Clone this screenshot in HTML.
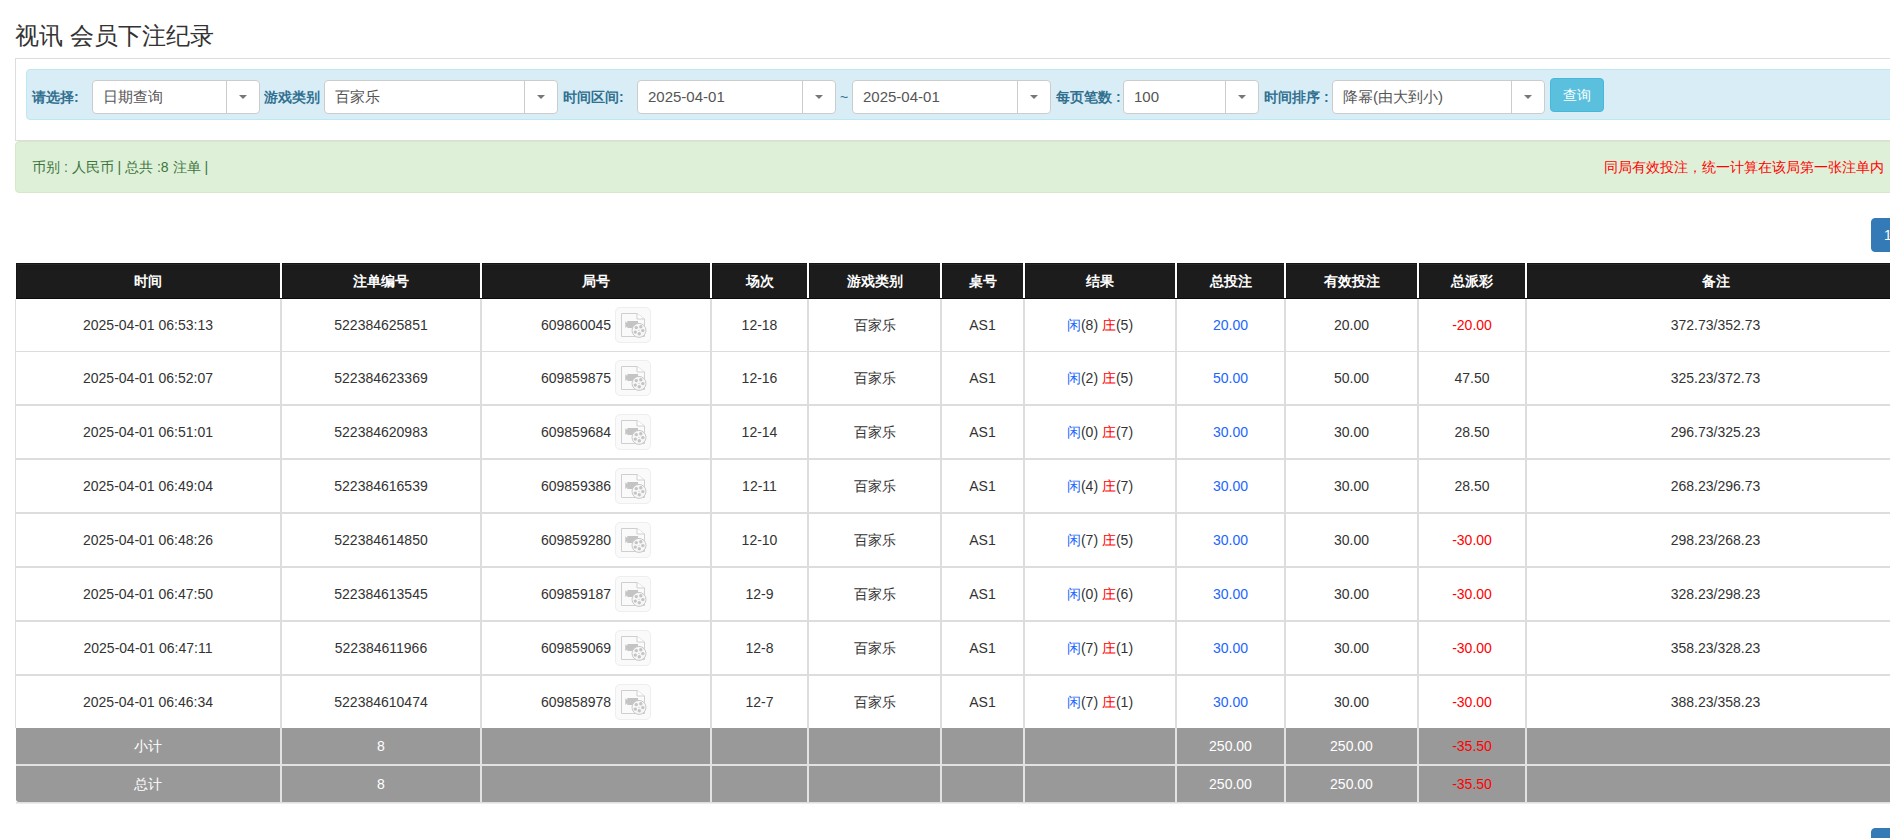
<!DOCTYPE html>
<html><head><meta charset="utf-8"><style>
*{box-sizing:border-box}
html,body{margin:0;padding:0;background:#fff}
body{width:1890px;height:838px;overflow:hidden;position:relative;font-family:"Liberation Sans",sans-serif;color:#333;font-size:14px}
.a{position:absolute}
.title{left:15px;top:19px;font-size:24px;line-height:34px;color:#333;white-space:nowrap}
.well{left:15px;top:58px;width:1900px;height:83px;border:1px solid #ddd;background:#fff}
.info{left:26px;top:69px;width:1890px;height:51px;background:#d9edf7;border:1px solid #bce8f1;border-radius:4px}
.lbl{font-size:14px;font-weight:bold;color:#31708f;line-height:34px;top:80px;white-space:nowrap}
.sel{top:80px;height:34px;background:#fff;border:1px solid #ccc;border-radius:4px}
.sel .t{position:absolute;left:10px;top:0;line-height:32px;font-size:15px;color:#555;white-space:nowrap}
.sel .d{position:absolute;top:0;bottom:0;width:1px;background:#ccc}
.sel .c{position:absolute;top:14px;width:0;height:0;border-left:4px solid transparent;border-right:4px solid transparent;border-top:4px solid #777}
.btn{left:1550px;top:78px;width:54px;height:34px;background:#5bc0de;border:1px solid #46b8da;border-radius:4px;color:#fff;font-size:14px;line-height:33px;text-align:center}
.succ{left:15px;top:141px;width:1890px;height:52px;background:#dff0d8;border:1px solid #d6e9c6;border-radius:4px}
.stxt{left:32px;top:158px;font-size:14px;line-height:18px;color:#3c763d;white-space:nowrap}
.rtxt{right:7px;top:158px;font-size:14px;line-height:18px;color:#ff0000;white-space:nowrap}
.pg{left:1871px;width:34px;height:34px;background:#337ab7;border:1px solid #337ab7;border-radius:4px;color:#fff;font-size:14px;line-height:32px;text-align:center}
.cell{position:absolute;display:flex;align-items:center;justify-content:center;white-space:nowrap;font-size:14px;line-height:20px}
.hd{background:#1c1c1c;color:#fff;font-weight:bold;font-size:14px;padding-top:0px;box-shadow:inset 1px 1px 0 #151515, inset 0 2px 0 #262626}
.ln{position:absolute;background:#ddd}
.ic{display:inline-block;width:36px;height:36px;margin-left:4px;border:1px solid #eee;border-radius:5px;background:#fafafa;position:relative;vertical-align:middle}
.ic svg{position:absolute;left:-1px;top:-1px}
.gr{background:#999;color:#fff}
</style></head><body>

<div class="a title">视讯 会员下注纪录</div>
<div class="a well"></div>
<div class="a info"></div>
<div class="a lbl" style="left:32px">请选择:</div>
<div class="a sel" style="left:92px;width:168px"><span class="t">日期查询</span><span class="d" style="left:133px"></span><span class="c" style="left:146px"></span></div>
<div class="a lbl" style="left:264px">游戏类别</div>
<div class="a sel" style="left:324px;width:234px"><span class="t">百家乐</span><span class="d" style="left:199px"></span><span class="c" style="left:212px"></span></div>
<div class="a lbl" style="left:563px">时间区间:</div>
<div class="a sel" style="left:637px;width:199px"><span class="t">2025-04-01</span><span class="d" style="left:164px"></span><span class="c" style="left:177px"></span></div>
<div class="a lbl" style="left:840px;font-weight:normal">~</div>
<div class="a sel" style="left:852px;width:199px"><span class="t">2025-04-01</span><span class="d" style="left:164px"></span><span class="c" style="left:177px"></span></div>
<div class="a lbl" style="left:1056px">每页笔数 :</div>
<div class="a sel" style="left:1123px;width:136px"><span class="t">100</span><span class="d" style="left:101px"></span><span class="c" style="left:114px"></span></div>
<div class="a lbl" style="left:1264px">时间排序 :</div>
<div class="a sel" style="left:1332px;width:213px"><span class="t">降幂(由大到小)</span><span class="d" style="left:178px"></span><span class="c" style="left:191px"></span></div>
<div class="a btn">查询</div>
<div class="a succ"></div>
<div class="a stxt">币别 : 人民币 | 总共 :8 注单 |</div>
<div class="a rtxt" style="right:auto;left:1604px">同局有效投注，统一计算在该局第一张注单内</div>
<div class="a pg" style="top:218px">1</div>
<div class="a pg" style="top:828px">1</div>
<div class="cell hd" style="left:16px;top:263px;width:264px;height:36px">时间</div>
<div class="cell hd" style="left:282px;top:263px;width:198px;height:36px">注单编号</div>
<div class="cell hd" style="left:482px;top:263px;width:228px;height:36px">局号</div>
<div class="cell hd" style="left:712px;top:263px;width:95px;height:36px">场次</div>
<div class="cell hd" style="left:809px;top:263px;width:131px;height:36px">游戏类别</div>
<div class="cell hd" style="left:942px;top:263px;width:81px;height:36px">桌号</div>
<div class="cell hd" style="left:1025px;top:263px;width:150px;height:36px">结果</div>
<div class="cell hd" style="left:1177px;top:263px;width:107px;height:36px">总投注</div>
<div class="cell hd" style="left:1286px;top:263px;width:131px;height:36px">有效投注</div>
<div class="cell hd" style="left:1419px;top:263px;width:106px;height:36px">总派彩</div>
<div class="cell hd" style="left:1527px;top:263px;width:377px;height:36px">备注</div>
<div class="ln" style="left:16px;top:298px;width:1890px;height:1px;background:#0a0a0a"></div>
<div class="cell" style="left:16px;top:299px;width:264px;height:52px"><span>2025-04-01 06:53:13</span></div>
<div class="cell" style="left:282px;top:299px;width:198px;height:52px"><span>522384625851</span></div>
<div class="cell" style="left:482px;top:299px;width:228px;height:52px"><span><span style="position:relative;top:1px">609860045</span><span class="ic"><svg width="36" height="36" viewBox="0 0 36 36"><path d="M6.5 6.5H22L29.5 12V29.5H6.5Z" fill="none" stroke="#cfcfcf" stroke-width="1"/><path d="M22 6.5V12H29.5" fill="#fff" stroke="#cfcfcf" stroke-width="1"/><path d="M10.3 14.3L12.3 16V14H23V21H12.3V19.3L10.3 21Z" fill="#c4c4c4"/><circle cx="24" cy="23.4" r="7" fill="#f7f7f7" stroke="#c8c8c8" stroke-width="1"/><circle cx="21.3" cy="20.6" r="1.7" fill="#c4c4c4"/><circle cx="25.8" cy="19.8" r="1.7" fill="#c4c4c4"/><circle cx="27.8" cy="23.6" r="1.7" fill="#c4c4c4"/><circle cx="24.3" cy="26.8" r="1.7" fill="#c4c4c4"/><circle cx="20.3" cy="25.1" r="1.7" fill="#c4c4c4"/><circle cx="24" cy="23.3" r="0.6" fill="#c4c4c4"/></svg></span></span></div>
<div class="cell" style="left:712px;top:299px;width:95px;height:52px"><span>12-18</span></div>
<div class="cell" style="left:809px;top:299px;width:131px;height:52px"><span>百家乐</span></div>
<div class="cell" style="left:942px;top:299px;width:81px;height:52px"><span>AS1</span></div>
<div class="cell" style="left:1025px;top:299px;width:150px;height:52px"><span><span style="color:#1a66ff">闲</span>(8) <span style="color:#ff0000">庄</span>(5)</span></div>
<div class="cell" style="left:1177px;top:299px;width:107px;height:52px"><span><span style="color:#1a66ff">20.00</span></span></div>
<div class="cell" style="left:1286px;top:299px;width:131px;height:52px"><span>20.00</span></div>
<div class="cell" style="left:1419px;top:299px;width:106px;height:52px"><span><span style="color:#ff0000">-20.00</span></span></div>
<div class="cell" style="left:1527px;top:299px;width:377px;height:52px"><span>372.73/352.73</span></div>
<div class="cell" style="left:16px;top:352px;width:264px;height:52px"><span>2025-04-01 06:52:07</span></div>
<div class="cell" style="left:282px;top:352px;width:198px;height:52px"><span>522384623369</span></div>
<div class="cell" style="left:482px;top:352px;width:228px;height:52px"><span><span style="position:relative;top:1px">609859875</span><span class="ic"><svg width="36" height="36" viewBox="0 0 36 36"><path d="M6.5 6.5H22L29.5 12V29.5H6.5Z" fill="none" stroke="#cfcfcf" stroke-width="1"/><path d="M22 6.5V12H29.5" fill="#fff" stroke="#cfcfcf" stroke-width="1"/><path d="M10.3 14.3L12.3 16V14H23V21H12.3V19.3L10.3 21Z" fill="#c4c4c4"/><circle cx="24" cy="23.4" r="7" fill="#f7f7f7" stroke="#c8c8c8" stroke-width="1"/><circle cx="21.3" cy="20.6" r="1.7" fill="#c4c4c4"/><circle cx="25.8" cy="19.8" r="1.7" fill="#c4c4c4"/><circle cx="27.8" cy="23.6" r="1.7" fill="#c4c4c4"/><circle cx="24.3" cy="26.8" r="1.7" fill="#c4c4c4"/><circle cx="20.3" cy="25.1" r="1.7" fill="#c4c4c4"/><circle cx="24" cy="23.3" r="0.6" fill="#c4c4c4"/></svg></span></span></div>
<div class="cell" style="left:712px;top:352px;width:95px;height:52px"><span>12-16</span></div>
<div class="cell" style="left:809px;top:352px;width:131px;height:52px"><span>百家乐</span></div>
<div class="cell" style="left:942px;top:352px;width:81px;height:52px"><span>AS1</span></div>
<div class="cell" style="left:1025px;top:352px;width:150px;height:52px"><span><span style="color:#1a66ff">闲</span>(2) <span style="color:#ff0000">庄</span>(5)</span></div>
<div class="cell" style="left:1177px;top:352px;width:107px;height:52px"><span><span style="color:#1a66ff">50.00</span></span></div>
<div class="cell" style="left:1286px;top:352px;width:131px;height:52px"><span>50.00</span></div>
<div class="cell" style="left:1419px;top:352px;width:106px;height:52px"><span><span style="color:#333">47.50</span></span></div>
<div class="cell" style="left:1527px;top:352px;width:377px;height:52px"><span>325.23/372.73</span></div>
<div class="cell" style="left:16px;top:406px;width:264px;height:52px"><span>2025-04-01 06:51:01</span></div>
<div class="cell" style="left:282px;top:406px;width:198px;height:52px"><span>522384620983</span></div>
<div class="cell" style="left:482px;top:406px;width:228px;height:52px"><span><span style="position:relative;top:1px">609859684</span><span class="ic"><svg width="36" height="36" viewBox="0 0 36 36"><path d="M6.5 6.5H22L29.5 12V29.5H6.5Z" fill="none" stroke="#cfcfcf" stroke-width="1"/><path d="M22 6.5V12H29.5" fill="#fff" stroke="#cfcfcf" stroke-width="1"/><path d="M10.3 14.3L12.3 16V14H23V21H12.3V19.3L10.3 21Z" fill="#c4c4c4"/><circle cx="24" cy="23.4" r="7" fill="#f7f7f7" stroke="#c8c8c8" stroke-width="1"/><circle cx="21.3" cy="20.6" r="1.7" fill="#c4c4c4"/><circle cx="25.8" cy="19.8" r="1.7" fill="#c4c4c4"/><circle cx="27.8" cy="23.6" r="1.7" fill="#c4c4c4"/><circle cx="24.3" cy="26.8" r="1.7" fill="#c4c4c4"/><circle cx="20.3" cy="25.1" r="1.7" fill="#c4c4c4"/><circle cx="24" cy="23.3" r="0.6" fill="#c4c4c4"/></svg></span></span></div>
<div class="cell" style="left:712px;top:406px;width:95px;height:52px"><span>12-14</span></div>
<div class="cell" style="left:809px;top:406px;width:131px;height:52px"><span>百家乐</span></div>
<div class="cell" style="left:942px;top:406px;width:81px;height:52px"><span>AS1</span></div>
<div class="cell" style="left:1025px;top:406px;width:150px;height:52px"><span><span style="color:#1a66ff">闲</span>(0) <span style="color:#ff0000">庄</span>(7)</span></div>
<div class="cell" style="left:1177px;top:406px;width:107px;height:52px"><span><span style="color:#1a66ff">30.00</span></span></div>
<div class="cell" style="left:1286px;top:406px;width:131px;height:52px"><span>30.00</span></div>
<div class="cell" style="left:1419px;top:406px;width:106px;height:52px"><span><span style="color:#333">28.50</span></span></div>
<div class="cell" style="left:1527px;top:406px;width:377px;height:52px"><span>296.73/325.23</span></div>
<div class="cell" style="left:16px;top:460px;width:264px;height:52px"><span>2025-04-01 06:49:04</span></div>
<div class="cell" style="left:282px;top:460px;width:198px;height:52px"><span>522384616539</span></div>
<div class="cell" style="left:482px;top:460px;width:228px;height:52px"><span><span style="position:relative;top:1px">609859386</span><span class="ic"><svg width="36" height="36" viewBox="0 0 36 36"><path d="M6.5 6.5H22L29.5 12V29.5H6.5Z" fill="none" stroke="#cfcfcf" stroke-width="1"/><path d="M22 6.5V12H29.5" fill="#fff" stroke="#cfcfcf" stroke-width="1"/><path d="M10.3 14.3L12.3 16V14H23V21H12.3V19.3L10.3 21Z" fill="#c4c4c4"/><circle cx="24" cy="23.4" r="7" fill="#f7f7f7" stroke="#c8c8c8" stroke-width="1"/><circle cx="21.3" cy="20.6" r="1.7" fill="#c4c4c4"/><circle cx="25.8" cy="19.8" r="1.7" fill="#c4c4c4"/><circle cx="27.8" cy="23.6" r="1.7" fill="#c4c4c4"/><circle cx="24.3" cy="26.8" r="1.7" fill="#c4c4c4"/><circle cx="20.3" cy="25.1" r="1.7" fill="#c4c4c4"/><circle cx="24" cy="23.3" r="0.6" fill="#c4c4c4"/></svg></span></span></div>
<div class="cell" style="left:712px;top:460px;width:95px;height:52px"><span>12-11</span></div>
<div class="cell" style="left:809px;top:460px;width:131px;height:52px"><span>百家乐</span></div>
<div class="cell" style="left:942px;top:460px;width:81px;height:52px"><span>AS1</span></div>
<div class="cell" style="left:1025px;top:460px;width:150px;height:52px"><span><span style="color:#1a66ff">闲</span>(4) <span style="color:#ff0000">庄</span>(7)</span></div>
<div class="cell" style="left:1177px;top:460px;width:107px;height:52px"><span><span style="color:#1a66ff">30.00</span></span></div>
<div class="cell" style="left:1286px;top:460px;width:131px;height:52px"><span>30.00</span></div>
<div class="cell" style="left:1419px;top:460px;width:106px;height:52px"><span><span style="color:#333">28.50</span></span></div>
<div class="cell" style="left:1527px;top:460px;width:377px;height:52px"><span>268.23/296.73</span></div>
<div class="cell" style="left:16px;top:514px;width:264px;height:52px"><span>2025-04-01 06:48:26</span></div>
<div class="cell" style="left:282px;top:514px;width:198px;height:52px"><span>522384614850</span></div>
<div class="cell" style="left:482px;top:514px;width:228px;height:52px"><span><span style="position:relative;top:1px">609859280</span><span class="ic"><svg width="36" height="36" viewBox="0 0 36 36"><path d="M6.5 6.5H22L29.5 12V29.5H6.5Z" fill="none" stroke="#cfcfcf" stroke-width="1"/><path d="M22 6.5V12H29.5" fill="#fff" stroke="#cfcfcf" stroke-width="1"/><path d="M10.3 14.3L12.3 16V14H23V21H12.3V19.3L10.3 21Z" fill="#c4c4c4"/><circle cx="24" cy="23.4" r="7" fill="#f7f7f7" stroke="#c8c8c8" stroke-width="1"/><circle cx="21.3" cy="20.6" r="1.7" fill="#c4c4c4"/><circle cx="25.8" cy="19.8" r="1.7" fill="#c4c4c4"/><circle cx="27.8" cy="23.6" r="1.7" fill="#c4c4c4"/><circle cx="24.3" cy="26.8" r="1.7" fill="#c4c4c4"/><circle cx="20.3" cy="25.1" r="1.7" fill="#c4c4c4"/><circle cx="24" cy="23.3" r="0.6" fill="#c4c4c4"/></svg></span></span></div>
<div class="cell" style="left:712px;top:514px;width:95px;height:52px"><span>12-10</span></div>
<div class="cell" style="left:809px;top:514px;width:131px;height:52px"><span>百家乐</span></div>
<div class="cell" style="left:942px;top:514px;width:81px;height:52px"><span>AS1</span></div>
<div class="cell" style="left:1025px;top:514px;width:150px;height:52px"><span><span style="color:#1a66ff">闲</span>(7) <span style="color:#ff0000">庄</span>(5)</span></div>
<div class="cell" style="left:1177px;top:514px;width:107px;height:52px"><span><span style="color:#1a66ff">30.00</span></span></div>
<div class="cell" style="left:1286px;top:514px;width:131px;height:52px"><span>30.00</span></div>
<div class="cell" style="left:1419px;top:514px;width:106px;height:52px"><span><span style="color:#ff0000">-30.00</span></span></div>
<div class="cell" style="left:1527px;top:514px;width:377px;height:52px"><span>298.23/268.23</span></div>
<div class="cell" style="left:16px;top:568px;width:264px;height:52px"><span>2025-04-01 06:47:50</span></div>
<div class="cell" style="left:282px;top:568px;width:198px;height:52px"><span>522384613545</span></div>
<div class="cell" style="left:482px;top:568px;width:228px;height:52px"><span><span style="position:relative;top:1px">609859187</span><span class="ic"><svg width="36" height="36" viewBox="0 0 36 36"><path d="M6.5 6.5H22L29.5 12V29.5H6.5Z" fill="none" stroke="#cfcfcf" stroke-width="1"/><path d="M22 6.5V12H29.5" fill="#fff" stroke="#cfcfcf" stroke-width="1"/><path d="M10.3 14.3L12.3 16V14H23V21H12.3V19.3L10.3 21Z" fill="#c4c4c4"/><circle cx="24" cy="23.4" r="7" fill="#f7f7f7" stroke="#c8c8c8" stroke-width="1"/><circle cx="21.3" cy="20.6" r="1.7" fill="#c4c4c4"/><circle cx="25.8" cy="19.8" r="1.7" fill="#c4c4c4"/><circle cx="27.8" cy="23.6" r="1.7" fill="#c4c4c4"/><circle cx="24.3" cy="26.8" r="1.7" fill="#c4c4c4"/><circle cx="20.3" cy="25.1" r="1.7" fill="#c4c4c4"/><circle cx="24" cy="23.3" r="0.6" fill="#c4c4c4"/></svg></span></span></div>
<div class="cell" style="left:712px;top:568px;width:95px;height:52px"><span>12-9</span></div>
<div class="cell" style="left:809px;top:568px;width:131px;height:52px"><span>百家乐</span></div>
<div class="cell" style="left:942px;top:568px;width:81px;height:52px"><span>AS1</span></div>
<div class="cell" style="left:1025px;top:568px;width:150px;height:52px"><span><span style="color:#1a66ff">闲</span>(0) <span style="color:#ff0000">庄</span>(6)</span></div>
<div class="cell" style="left:1177px;top:568px;width:107px;height:52px"><span><span style="color:#1a66ff">30.00</span></span></div>
<div class="cell" style="left:1286px;top:568px;width:131px;height:52px"><span>30.00</span></div>
<div class="cell" style="left:1419px;top:568px;width:106px;height:52px"><span><span style="color:#ff0000">-30.00</span></span></div>
<div class="cell" style="left:1527px;top:568px;width:377px;height:52px"><span>328.23/298.23</span></div>
<div class="cell" style="left:16px;top:622px;width:264px;height:52px"><span>2025-04-01 06:47:11</span></div>
<div class="cell" style="left:282px;top:622px;width:198px;height:52px"><span>522384611966</span></div>
<div class="cell" style="left:482px;top:622px;width:228px;height:52px"><span><span style="position:relative;top:1px">609859069</span><span class="ic"><svg width="36" height="36" viewBox="0 0 36 36"><path d="M6.5 6.5H22L29.5 12V29.5H6.5Z" fill="none" stroke="#cfcfcf" stroke-width="1"/><path d="M22 6.5V12H29.5" fill="#fff" stroke="#cfcfcf" stroke-width="1"/><path d="M10.3 14.3L12.3 16V14H23V21H12.3V19.3L10.3 21Z" fill="#c4c4c4"/><circle cx="24" cy="23.4" r="7" fill="#f7f7f7" stroke="#c8c8c8" stroke-width="1"/><circle cx="21.3" cy="20.6" r="1.7" fill="#c4c4c4"/><circle cx="25.8" cy="19.8" r="1.7" fill="#c4c4c4"/><circle cx="27.8" cy="23.6" r="1.7" fill="#c4c4c4"/><circle cx="24.3" cy="26.8" r="1.7" fill="#c4c4c4"/><circle cx="20.3" cy="25.1" r="1.7" fill="#c4c4c4"/><circle cx="24" cy="23.3" r="0.6" fill="#c4c4c4"/></svg></span></span></div>
<div class="cell" style="left:712px;top:622px;width:95px;height:52px"><span>12-8</span></div>
<div class="cell" style="left:809px;top:622px;width:131px;height:52px"><span>百家乐</span></div>
<div class="cell" style="left:942px;top:622px;width:81px;height:52px"><span>AS1</span></div>
<div class="cell" style="left:1025px;top:622px;width:150px;height:52px"><span><span style="color:#1a66ff">闲</span>(7) <span style="color:#ff0000">庄</span>(1)</span></div>
<div class="cell" style="left:1177px;top:622px;width:107px;height:52px"><span><span style="color:#1a66ff">30.00</span></span></div>
<div class="cell" style="left:1286px;top:622px;width:131px;height:52px"><span>30.00</span></div>
<div class="cell" style="left:1419px;top:622px;width:106px;height:52px"><span><span style="color:#ff0000">-30.00</span></span></div>
<div class="cell" style="left:1527px;top:622px;width:377px;height:52px"><span>358.23/328.23</span></div>
<div class="cell" style="left:16px;top:676px;width:264px;height:52px"><span>2025-04-01 06:46:34</span></div>
<div class="cell" style="left:282px;top:676px;width:198px;height:52px"><span>522384610474</span></div>
<div class="cell" style="left:482px;top:676px;width:228px;height:52px"><span><span style="position:relative;top:1px">609858978</span><span class="ic"><svg width="36" height="36" viewBox="0 0 36 36"><path d="M6.5 6.5H22L29.5 12V29.5H6.5Z" fill="none" stroke="#cfcfcf" stroke-width="1"/><path d="M22 6.5V12H29.5" fill="#fff" stroke="#cfcfcf" stroke-width="1"/><path d="M10.3 14.3L12.3 16V14H23V21H12.3V19.3L10.3 21Z" fill="#c4c4c4"/><circle cx="24" cy="23.4" r="7" fill="#f7f7f7" stroke="#c8c8c8" stroke-width="1"/><circle cx="21.3" cy="20.6" r="1.7" fill="#c4c4c4"/><circle cx="25.8" cy="19.8" r="1.7" fill="#c4c4c4"/><circle cx="27.8" cy="23.6" r="1.7" fill="#c4c4c4"/><circle cx="24.3" cy="26.8" r="1.7" fill="#c4c4c4"/><circle cx="20.3" cy="25.1" r="1.7" fill="#c4c4c4"/><circle cx="24" cy="23.3" r="0.6" fill="#c4c4c4"/></svg></span></span></div>
<div class="cell" style="left:712px;top:676px;width:95px;height:52px"><span>12-7</span></div>
<div class="cell" style="left:809px;top:676px;width:131px;height:52px"><span>百家乐</span></div>
<div class="cell" style="left:942px;top:676px;width:81px;height:52px"><span>AS1</span></div>
<div class="cell" style="left:1025px;top:676px;width:150px;height:52px"><span><span style="color:#1a66ff">闲</span>(7) <span style="color:#ff0000">庄</span>(1)</span></div>
<div class="cell" style="left:1177px;top:676px;width:107px;height:52px"><span><span style="color:#1a66ff">30.00</span></span></div>
<div class="cell" style="left:1286px;top:676px;width:131px;height:52px"><span>30.00</span></div>
<div class="cell" style="left:1419px;top:676px;width:106px;height:52px"><span><span style="color:#ff0000">-30.00</span></span></div>
<div class="cell" style="left:1527px;top:676px;width:377px;height:52px"><span>388.23/358.23</span></div>
<div class="ln" style="left:15px;top:351px;width:1890px;height:1px"></div>
<div class="ln" style="left:15px;top:404px;width:1890px;height:2px"></div>
<div class="ln" style="left:15px;top:458px;width:1890px;height:2px"></div>
<div class="ln" style="left:15px;top:512px;width:1890px;height:2px"></div>
<div class="ln" style="left:15px;top:566px;width:1890px;height:2px"></div>
<div class="ln" style="left:15px;top:620px;width:1890px;height:2px"></div>
<div class="ln" style="left:15px;top:674px;width:1890px;height:2px"></div>
<div class="ln" style="left:15px;top:299px;width:1px;height:429px"></div>
<div class="ln" style="left:280px;top:299px;width:1px;height:429px"></div>
<div class="ln" style="left:281px;top:299px;width:1px;height:429px"></div>
<div class="ln" style="left:480px;top:299px;width:1px;height:429px"></div>
<div class="ln" style="left:481px;top:299px;width:1px;height:429px"></div>
<div class="ln" style="left:710px;top:299px;width:1px;height:429px"></div>
<div class="ln" style="left:711px;top:299px;width:1px;height:429px"></div>
<div class="ln" style="left:807px;top:299px;width:1px;height:429px"></div>
<div class="ln" style="left:808px;top:299px;width:1px;height:429px"></div>
<div class="ln" style="left:940px;top:299px;width:1px;height:429px"></div>
<div class="ln" style="left:941px;top:299px;width:1px;height:429px"></div>
<div class="ln" style="left:1023px;top:299px;width:1px;height:429px"></div>
<div class="ln" style="left:1024px;top:299px;width:1px;height:429px"></div>
<div class="ln" style="left:1175px;top:299px;width:1px;height:429px"></div>
<div class="ln" style="left:1176px;top:299px;width:1px;height:429px"></div>
<div class="ln" style="left:1284px;top:299px;width:1px;height:429px"></div>
<div class="ln" style="left:1285px;top:299px;width:1px;height:429px"></div>
<div class="ln" style="left:1417px;top:299px;width:1px;height:429px"></div>
<div class="ln" style="left:1418px;top:299px;width:1px;height:429px"></div>
<div class="ln" style="left:1525px;top:299px;width:1px;height:429px"></div>
<div class="ln" style="left:1526px;top:299px;width:1px;height:429px"></div>
<div class="ln" style="left:1904px;top:299px;width:1px;height:429px"></div>
<div class="cell gr" style="left:16px;top:728px;width:264px;height:36px"><span>小计</span></div>
<div class="cell gr" style="left:282px;top:728px;width:198px;height:36px"><span>8</span></div>
<div class="cell gr" style="left:482px;top:728px;width:228px;height:36px"><span></span></div>
<div class="cell gr" style="left:712px;top:728px;width:95px;height:36px"><span></span></div>
<div class="cell gr" style="left:809px;top:728px;width:131px;height:36px"><span></span></div>
<div class="cell gr" style="left:942px;top:728px;width:81px;height:36px"><span></span></div>
<div class="cell gr" style="left:1025px;top:728px;width:150px;height:36px"><span></span></div>
<div class="cell gr" style="left:1177px;top:728px;width:107px;height:36px"><span>250.00</span></div>
<div class="cell gr" style="left:1286px;top:728px;width:131px;height:36px"><span>250.00</span></div>
<div class="cell gr" style="left:1419px;top:728px;width:106px;height:36px"><span><span style="color:#ff0000">-35.50</span></span></div>
<div class="cell gr" style="left:1527px;top:728px;width:377px;height:36px"><span></span></div>
<div class="cell gr" style="border-bottom-left-radius:3px;left:16px;top:766px;width:264px;height:36px"><span>总计</span></div>
<div class="cell gr" style="left:282px;top:766px;width:198px;height:36px"><span>8</span></div>
<div class="cell gr" style="left:482px;top:766px;width:228px;height:36px"><span></span></div>
<div class="cell gr" style="left:712px;top:766px;width:95px;height:36px"><span></span></div>
<div class="cell gr" style="left:809px;top:766px;width:131px;height:36px"><span></span></div>
<div class="cell gr" style="left:942px;top:766px;width:81px;height:36px"><span></span></div>
<div class="cell gr" style="left:1025px;top:766px;width:150px;height:36px"><span></span></div>
<div class="cell gr" style="left:1177px;top:766px;width:107px;height:36px"><span>250.00</span></div>
<div class="cell gr" style="left:1286px;top:766px;width:131px;height:36px"><span>250.00</span></div>
<div class="cell gr" style="left:1419px;top:766px;width:106px;height:36px"><span><span style="color:#ff0000">-35.50</span></span></div>
<div class="cell gr" style="left:1527px;top:766px;width:377px;height:36px"><span></span></div>
<div class="ln" style="left:16px;top:764px;width:1890px;height:2px;background:#e2e2e2"></div>
<div class="ln" style="left:280px;top:728px;width:1px;height:74px;background:#e2e2e2"></div>
<div class="ln" style="left:281px;top:728px;width:1px;height:74px;background:#e2e2e2"></div>
<div class="ln" style="left:480px;top:728px;width:1px;height:74px;background:#e2e2e2"></div>
<div class="ln" style="left:481px;top:728px;width:1px;height:74px;background:#e2e2e2"></div>
<div class="ln" style="left:710px;top:728px;width:1px;height:74px;background:#e2e2e2"></div>
<div class="ln" style="left:711px;top:728px;width:1px;height:74px;background:#e2e2e2"></div>
<div class="ln" style="left:807px;top:728px;width:1px;height:74px;background:#e2e2e2"></div>
<div class="ln" style="left:808px;top:728px;width:1px;height:74px;background:#e2e2e2"></div>
<div class="ln" style="left:940px;top:728px;width:1px;height:74px;background:#e2e2e2"></div>
<div class="ln" style="left:941px;top:728px;width:1px;height:74px;background:#e2e2e2"></div>
<div class="ln" style="left:1023px;top:728px;width:1px;height:74px;background:#e2e2e2"></div>
<div class="ln" style="left:1024px;top:728px;width:1px;height:74px;background:#e2e2e2"></div>
<div class="ln" style="left:1175px;top:728px;width:1px;height:74px;background:#e2e2e2"></div>
<div class="ln" style="left:1176px;top:728px;width:1px;height:74px;background:#e2e2e2"></div>
<div class="ln" style="left:1284px;top:728px;width:1px;height:74px;background:#e2e2e2"></div>
<div class="ln" style="left:1285px;top:728px;width:1px;height:74px;background:#e2e2e2"></div>
<div class="ln" style="left:1417px;top:728px;width:1px;height:74px;background:#e2e2e2"></div>
<div class="ln" style="left:1418px;top:728px;width:1px;height:74px;background:#e2e2e2"></div>
<div class="ln" style="left:1525px;top:728px;width:1px;height:74px;background:#e2e2e2"></div>
<div class="ln" style="left:1526px;top:728px;width:1px;height:74px;background:#e2e2e2"></div>
<div class="ln" style="left:1904px;top:728px;width:1px;height:74px;background:#e2e2e2"></div>
<div class="ln" style="left:15px;top:728px;width:1px;height:74px;background:#fff"></div>
<div class="a" style="left:16px;top:802px;width:1890px;height:2px;background:linear-gradient(#d8d8d8,#f4f4f4)"></div>
</body></html>
